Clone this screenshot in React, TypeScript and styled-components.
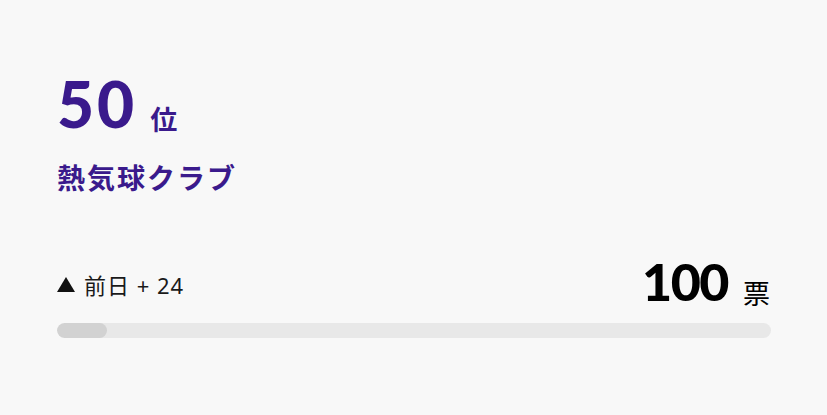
import React from "react";
import styled, { createGlobalStyle } from "styled-components";

const Global = createGlobalStyle`
  html, body { margin: 0; padding: 0; background: #f8f8f8; }
  body { font-family: "Noto Sans CJK JP", "Noto Sans", sans-serif; }
`;

const Card = styled.div`
  width: 827px;
  height: 415px;
  box-sizing: border-box;
  padding: 72px 56px 0 57px;
  background: #f8f8f8;
  display: flex;
  flex-direction: column;
`;

const RankRow = styled.div`
  display: flex;
  align-items: baseline;
  gap: 13px;
  color: #3a1a8c;
`;

const BigNum = styled.span<{ $size: number; $track: number }>`
  font-family: "Lato", "Liberation Sans", sans-serif;
  font-weight: 900;
  font-size: ${(p) => p.$size}px;
  line-height: 1;
  letter-spacing: ${(p) => p.$track}px;
`;

const Unit = styled.span<{ $weight: number; $drop: number }>`
  font-family: "Noto Sans CJK JP", sans-serif;
  font-size: 27px;
  font-weight: ${(p) => p.$weight};
  line-height: 1;
  position: relative;
  top: ${(p) => p.$drop}px;
`;

const Name = styled.div`
  margin-top: 23px;
  font-family: "Noto Sans CJK JP", sans-serif;
  font-weight: 700;
  font-size: 28px;
  letter-spacing: 2px;
  color: #3a1a8c;
  line-height: 1.3;
`;

const StatRow = styled.div`
  margin-top: 60px;
  display: flex;
  justify-content: space-between;
  align-items: center;
`;

const Delta = styled.span`
  display: flex;
  align-items: center;
  gap: 9px;
  font-family: "Noto Sans", "Noto Sans CJK JP", sans-serif;
  font-size: 22px;
  letter-spacing: 1px;
  color: #1a1a1a;
  white-space: pre;
  padding-top: 6px;
`;

const Triangle = styled.svg`
  width: 18px;
  height: 15px;
  flex: none;
`;

const Votes = styled.div`
  display: flex;
  align-items: baseline;
  gap: 15px;
  color: #000;
  margin-right: 1px;
`;

const Track = styled.div`
  margin-top: 16px;
  height: 15px;
  border-radius: 8px;
  background: #e8e8e8;
  overflow: hidden;
`;

const Fill = styled.div`
  height: 100%;
  border-radius: 8px;
  background: #d2d2d2;
`;

export default function App() {
  const pct = 7;
  return (
    <>
      <Global />
      <Card>
        <RankRow>
          <BigNum $size={64} $track={3}>50</BigNum>
          <Unit $weight={700} $drop={2}>位</Unit>
        </RankRow>
        <Name>熱気球クラブ</Name>
        <StatRow>
          <Delta>
            <Triangle viewBox="0 0 18 15">
              <polygon points="9,0 18,15 0,15" fill="#111" />
            </Triangle>
            <span>前日 + 24</span>
          </Delta>
          <Votes>
            <BigNum $size={52} $track={-1.5}>100</BigNum>
            <Unit $weight={400} $drop={3}>票</Unit>
          </Votes>
        </StatRow>
        <Track>
          <Fill style={{ width: `${pct}%` }} />
        </Track>
      </Card>
    </>
  );
}
